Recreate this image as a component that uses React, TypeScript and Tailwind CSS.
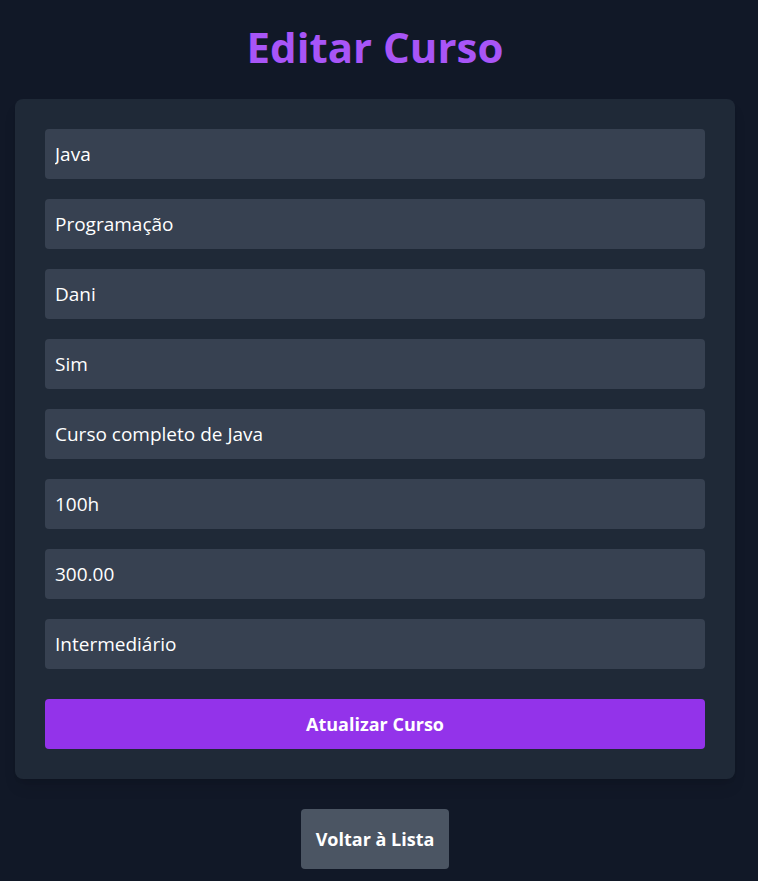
import React from "react";

const fields = [
  "Java",
  "Programação",
  "Dani",
  "Sim",
  "Curso completo de Java",
  "100h",
  "300.00",
  "Intermediário",
];

const App = () => {
  return (
    <div
      className="min-h-screen w-full bg-[#111827] text-white"
      style={{ fontFamily: '"Open Sans", "Noto Sans", sans-serif' }}
    >
      <div className="w-[750px] px-[15px] pt-[17px] pb-[12px] flex flex-col items-center">
        <h1 className="text-[42px] leading-[60px] font-bold text-[#a855f7] mb-[22px]">
          Editar Curso
        </h1>

        <form className="w-full bg-[#1f2937] rounded-lg p-[30px] flex flex-col gap-[20px] shadow-lg">
          {fields.map((v) => (
            <input
              key={v}
              defaultValue={v}
              className="h-[50px] w-full rounded bg-[#374151] px-[10px] text-[19px] text-white outline-none"
            />
          ))}
          <button
            type="button"
            className="mt-[10px] h-[50px] w-full rounded bg-[#9333ea] text-[18px] font-bold text-white"
          >
            Atualizar Curso
          </button>
        </form>

        <button
          type="button"
          className="mt-[30px] h-[60px] px-[15px] rounded bg-[#4b5563] text-[18px] font-bold text-white"
        >
          Voltar à Lista
        </button>
      </div>
    </div>
  );
};

export default App;
